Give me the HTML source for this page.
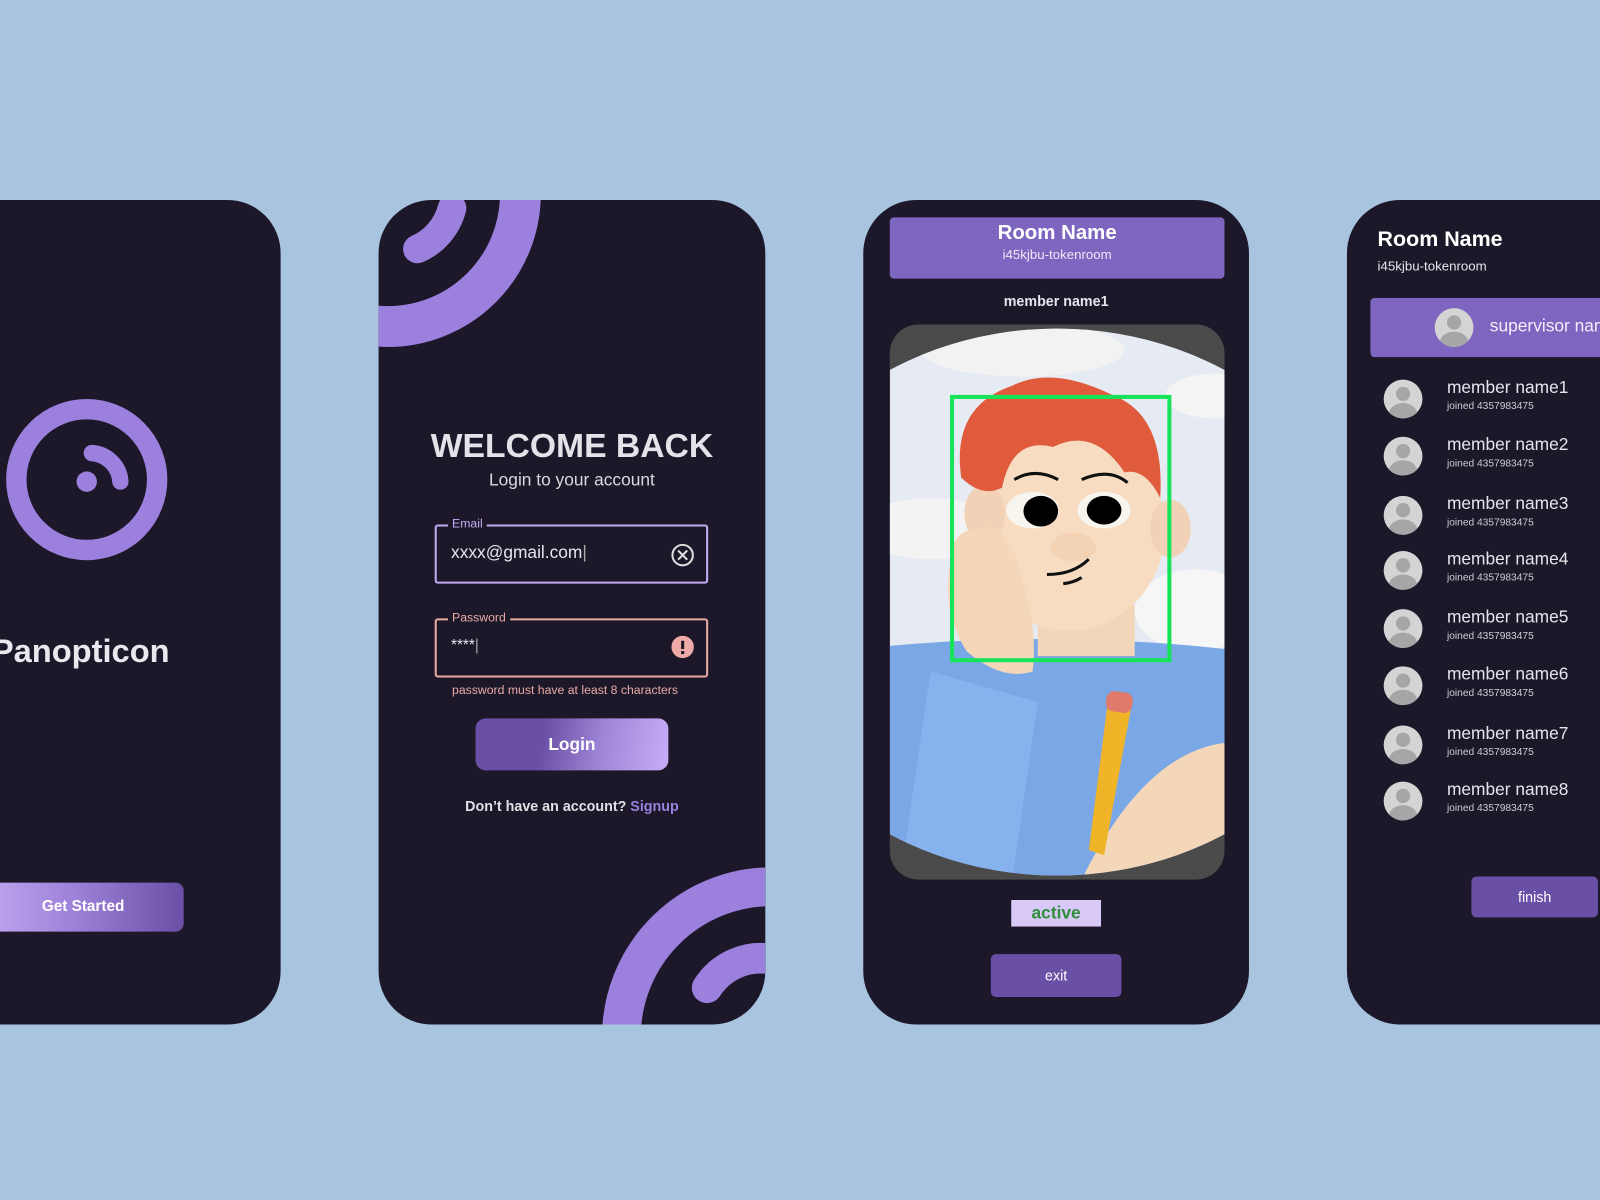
<!DOCTYPE html>
<html><head><meta charset="utf-8"><style>
html,body{margin:0;padding:0;width:1600px;height:1200px;overflow:hidden;background:#a9c4df;}
#w{position:absolute;left:0;top:0;width:1568px;height:1176px;transform:scale(1.020408);transform-origin:0 0;font-family:"Liberation Sans",sans-serif;}
.ph{position:absolute;top:196px;height:808px;background:#1d1829;border-radius:52px;overflow:hidden;}
.abs{position:absolute;}
.t{color:#e6e4ec;}
.row{position:absolute;left:36px;}
.av{position:absolute;left:0;top:0;width:38px;height:38px;border-radius:50%;background:#d4d4d4;overflow:hidden;}
.av:before{content:"";position:absolute;left:12px;top:7px;width:14px;height:14px;border-radius:50%;background:#a6a6a6;}
.av:after{content:"";position:absolute;left:5px;top:23px;width:28px;height:22px;border-radius:50%;background:#a6a6a6;}
.mn{position:absolute;left:62px;top:-2px;font-size:17px;color:#e6e4ec;white-space:nowrap;}
.mj{position:absolute;left:62px;top:21px;font-size:10px;color:#cfcbd8;white-space:nowrap;}
</style></head><body><div id="w">

<!-- phone 1 -->
<div class="ph" style="left:-60px;width:335px;">
  <svg class="abs" style="left:60px;top:190px" width="180" height="180" viewBox="0 0 180 180">
    <circle cx="85" cy="84" r="69" fill="none" stroke="#9b80de" stroke-width="20"/>
    <circle cx="85" cy="86" r="10" fill="#9b80de"/>
    <path d="M90 58 A30 30 0 0 1 118 86" fill="none" stroke="#9b80de" stroke-width="16" stroke-linecap="round"/>
  </svg>
  <div class="abs t" style="left:52px;top:424px;font-size:32px;font-weight:bold;color:#e8e8ee;">Panopticon</div>
  <div class="abs" style="left:0;top:669px;width:240px;height:48px;border-radius:0 8px 8px 0;background:linear-gradient(90deg,#d2b8fb,#9d82d9 55%,#6a4fa6);color:#fff;font-weight:bold;font-size:15px;line-height:48px;text-indent:101px;">Get Started</div>
</div>

<!-- phone 2 -->
<div class="ph" style="left:371px;width:379px;">
  <svg class="abs" style="left:0;top:0" width="379" height="808">
    <circle cx="9" cy="-6" r="130" fill="none" stroke="#9b80de" stroke-width="40"/>
    <path d="M38 48 A60 60 0 0 0 72 8" fill="none" stroke="#9b80de" stroke-width="28" stroke-linecap="round"/>
    <circle cx="385" cy="820" r="147" fill="none" stroke="#9b80de" stroke-width="38"/>
    <path d="M322 772 A62 62 0 0 1 385 744" fill="none" stroke="#9b80de" stroke-width="30" stroke-linecap="round"/>
  </svg>
  <div class="abs" style="left:0;width:379px;top:222px;text-align:center;font-size:33px;font-weight:bold;color:#e2e4ea;">WELCOME BACK</div>
  <div class="abs" style="left:0;width:379px;top:265px;text-align:center;font-size:17px;color:#d8d8de;">Login to your account</div>
  <div class="abs" style="left:55px;top:318px;width:264px;height:54px;border:2px solid #c4acf5;border-radius:3px;"></div>
  <div class="abs" style="left:68px;top:310px;padding:0 4px;background:#1d1829;font-size:12px;color:#c4acf5;">Email</div>
  <div class="abs" style="left:71px;top:336px;font-size:17px;color:#e6e4ec;">xxxx@gmail.com<span style="color:#aaa">|</span></div>
  <svg class="abs" style="left:286px;top:336px" width="24" height="24"><circle cx="12" cy="12" r="10" fill="none" stroke="#ddd" stroke-width="2"/><path d="M7.5 7.5L16.5 16.5M16.5 7.5L7.5 16.5" stroke="#ddd" stroke-width="2"/></svg>
  <div class="abs" style="left:55px;top:410px;width:264px;height:54px;border:2px solid #e7aaa6;border-radius:3px;"></div>
  <div class="abs" style="left:68px;top:402px;padding:0 4px;background:#1d1829;font-size:12px;color:#e7aaa6;">Password</div>
  <div class="abs" style="left:71px;top:428px;font-size:15px;color:#e6e4ec;">****<span style="color:#aaa">|</span></div>
  <svg class="abs" style="left:287px;top:427px" width="22" height="22"><circle cx="11" cy="11" r="11" fill="#eeaaa6"/><rect x="9.5" y="5" width="3" height="8" fill="#1d1829"/><rect x="9.5" y="15" width="3" height="3" fill="#1d1829"/></svg>
  <div class="abs" style="left:72px;top:473px;font-size:12px;color:#e7aaa6;">password must have at least 8 characters</div>
  <div class="abs" style="left:95px;top:508px;width:189px;height:51px;border-radius:10px;background:linear-gradient(100deg,#6a4fa6,#6a4fa6 35%,#9f85d6 65%,#c8adf7);color:#fff;font-weight:bold;font-size:17px;line-height:51px;text-align:center;">Login</div>
  <div class="abs" style="left:0;width:379px;top:586px;text-align:center;font-size:14px;font-weight:bold;color:#e0e0e6;">Don’t have an account? <span style="color:#9b80de">Signup</span></div>
</div>

<!-- phone 3 -->
<div class="ph" style="left:846px;width:378px;">
  <div class="abs" style="left:26px;top:17px;width:328px;height:60px;background:#7e66c0;border-radius:4px;text-align:center;">
    <div style="font-size:20px;font-weight:bold;color:#fff;margin-top:4px;">Room Name</div>
    <div style="font-size:13px;color:#ece8f6;margin-top:2px;">i45kjbu-tokenroom</div>
  </div>
  <div class="abs" style="left:0;width:378px;top:91px;text-align:center;font-size:14px;font-weight:bold;color:#e6e4ec;">member name1</div>
  <div class="abs" style="left:26px;top:122px;width:328px;height:544px;border-radius:28px;background:#4a4a4a;overflow:hidden;">
    <svg width="328" height="544" viewBox="0 0 328 544">
      <defs><clipPath id="c"><ellipse cx="164" cy="272" rx="310" ry="268"/></clipPath></defs>
      <g clip-path="url(#c)">
        <rect width="328" height="544" fill="#e6eaf3"/>
        <ellipse cx="130" cy="25" rx="100" ry="26" fill="#f2f2f2"/>
        <ellipse cx="320" cy="70" rx="50" ry="22" fill="#f4f4f4"/>
        <ellipse cx="40" cy="200" rx="70" ry="30" fill="#f3f3f3"/>
        <ellipse cx="300" cy="280" rx="60" ry="40" fill="#f6f6f6"/>
        <path d="M0 315 Q164 300 328 318 L328 544 L0 544Z" fill="#7aa7e6"/>
        <rect x="145" y="275" width="95" height="50" fill="#f2d6ba"/>
        <ellipse cx="175" cy="200" rx="95" ry="100" fill="#f7dcc2"/>
        <ellipse cx="93" cy="185" rx="20" ry="28" fill="#f2d2b6"/>
        <ellipse cx="275" cy="200" rx="20" ry="28" fill="#f2d2b6"/>
        <path d="M70 150 Q60 80 120 60 Q160 40 220 70 Q270 90 265 170 Q250 140 230 145 Q200 100 160 120 Q120 110 110 160 Q90 170 70 150Z" fill="#e05a3c"/>
        <path d="M122 152 Q142 140 165 152" stroke="#111" stroke-width="3" fill="none"/>
        <path d="M188 152 Q215 140 233 155" stroke="#111" stroke-width="3" fill="none"/>
        <ellipse cx="140" cy="182" rx="26" ry="18" fill="#f8f4ee"/><ellipse cx="148" cy="183" rx="17" ry="15" fill="#000"/>
        <ellipse cx="210" cy="182" rx="26" ry="18" fill="#f8f4ee"/><ellipse cx="210" cy="182" rx="17" ry="14" fill="#000"/>
        <ellipse cx="180" cy="218" rx="22" ry="14" fill="#f4d2b4"/>
        <path d="M154 245 Q180 245 195 230" stroke="#111" stroke-width="3" fill="none"/>
        <path d="M170 254 Q180 253 188 248" stroke="#111" stroke-width="3" fill="none"/>
        <path d="M60 230 Q50 280 75 320 Q110 350 140 340 Q145 300 130 250 Q115 190 90 200 Q60 200 60 230Z" fill="#f4d6b8"/>
        <path d="M40 340 L145 370 L120 544 L10 544 Z" fill="#86b2ee"/>
        <path d="M190 540 Q250 420 328 410 L328 544Z" fill="#f4d6b8"/>
        <path d="M213 375 L236 378 L210 520 L195 515Z" fill="#f0b429"/>
        <rect x="212" y="360" width="26" height="20" rx="8" fill="#e07a6a" transform="rotate(8 225 370)"/>
      </g>
      <rect x="61" y="71" width="213" height="258" fill="none" stroke="#17e35a" stroke-width="4"/>
    </svg>
  </div>
  <div class="abs" style="left:145px;top:686px;width:88px;height:26px;background:#d9c9f8;color:#2f8d3c;font-weight:bold;font-size:17px;line-height:26px;text-align:center;">active</div>
  <div class="abs" style="left:125px;top:739px;width:128px;height:42px;background:#6a4fa6;border-radius:5px;color:#fff;font-size:14px;line-height:42px;text-align:center;">exit</div>
</div>

<!-- phone 4 -->
<div class="ph" style="left:1320px;width:320px;">
  <div class="abs" style="left:30px;top:27px;font-size:21px;font-weight:bold;color:#fff;">Room Name</div>
  <div class="abs" style="left:30px;top:57px;font-size:13px;color:#e6e4ec;">i45kjbu-tokenroom</div>
  <div class="abs" style="left:23px;top:96px;width:300px;height:58px;background:#7e66c0;border-radius:4px;">
    <div class="av" style="left:63px;top:10px;"></div>
    <div class="abs" style="left:117px;top:18px;font-size:17px;color:#f2eefa;white-space:nowrap;">supervisor name</div>
  </div>
  <div class="row" style="top:176px"><div class="av"></div><div class="mn">member name1</div><div class="mj">joined 4357983475</div></div>
  <div class="row" style="top:232px"><div class="av"></div><div class="mn">member name2</div><div class="mj">joined 4357983475</div></div>
  <div class="row" style="top:290px"><div class="av"></div><div class="mn">member name3</div><div class="mj">joined 4357983475</div></div>
  <div class="row" style="top:344px"><div class="av"></div><div class="mn">member name4</div><div class="mj">joined 4357983475</div></div>
  <div class="row" style="top:401px"><div class="av"></div><div class="mn">member name5</div><div class="mj">joined 4357983475</div></div>
  <div class="row" style="top:457px"><div class="av"></div><div class="mn">member name6</div><div class="mj">joined 4357983475</div></div>
  <div class="row" style="top:515px"><div class="av"></div><div class="mn">member name7</div><div class="mj">joined 4357983475</div></div>
  <div class="row" style="top:570px"><div class="av"></div><div class="mn">member name8</div><div class="mj">joined 4357983475</div></div>
  <div class="abs" style="left:122px;top:663px;width:124px;height:40px;background:#6a4fa6;border-radius:5px;color:#fff;font-size:14px;line-height:40px;text-align:center;">finish</div>
</div>

</div></body></html>
